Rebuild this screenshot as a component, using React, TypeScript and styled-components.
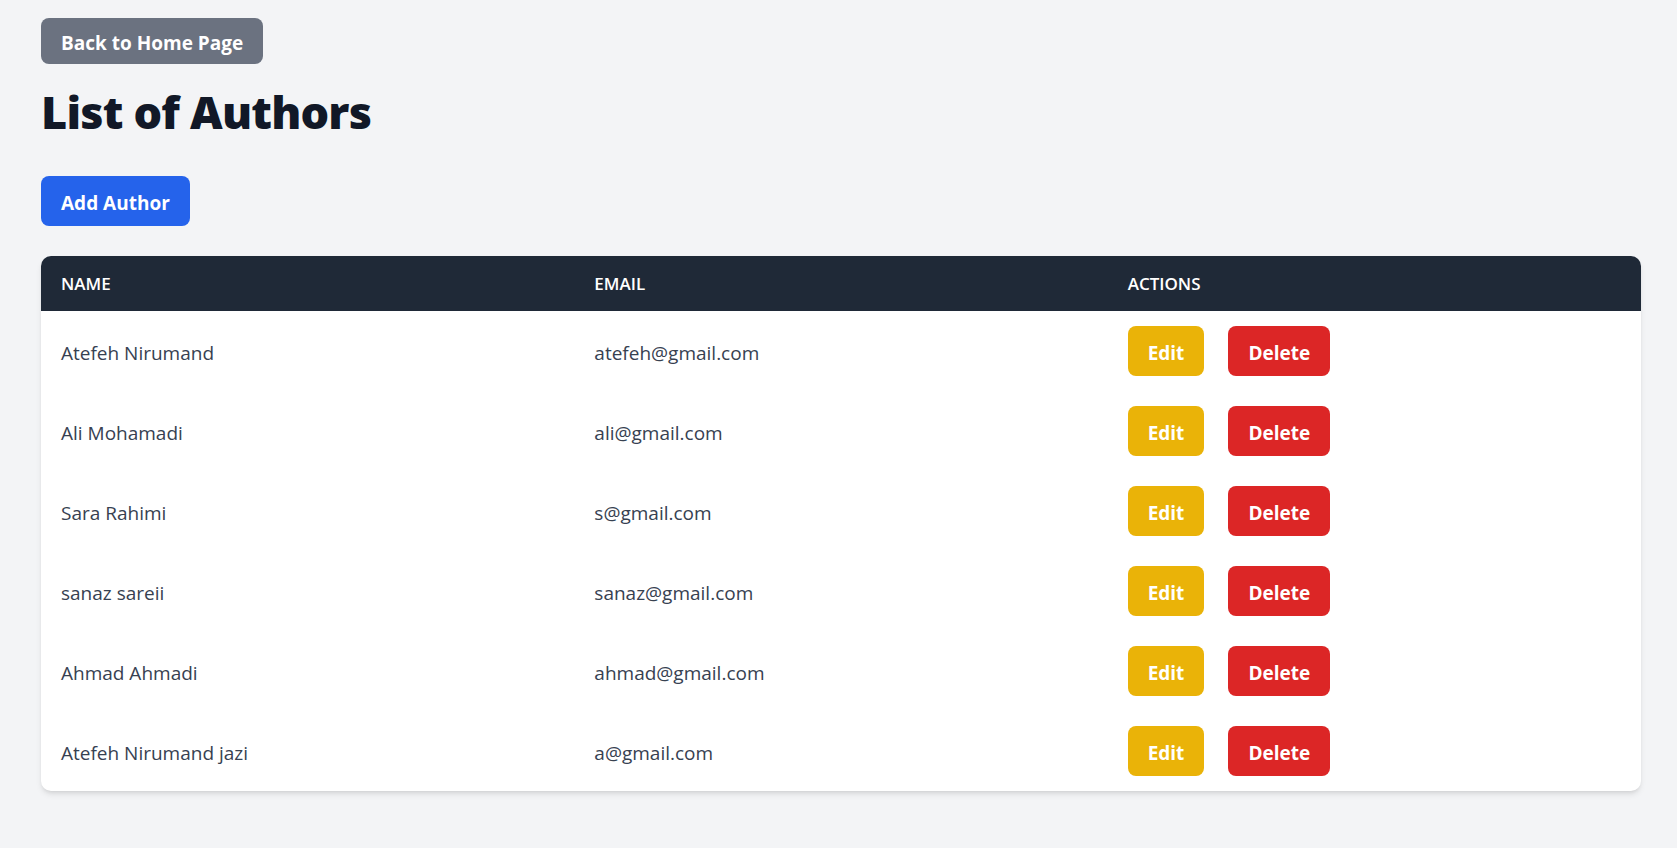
import { createGlobalStyle, styled } from "styled-components"

interface IAuthor {
    name: string,
    email: string
}

const authors: IAuthor[] = [
    { name: "Atefeh Nirumand", email: "atefeh@gmail.com" },
    { name: "Ali Mohamadi", email: "ali@gmail.com" },
    { name: "Sara Rahimi", email: "s@gmail.com" },
    { name: "sanaz sareii", email: "sanaz@gmail.com" },
    { name: "Ahmad Ahmadi", email: "ahmad@gmail.com" },
    { name: "Atefeh Nirumand jazi", email: "a@gmail.com" },
]

const App = () => {
  return (
    <Page>
        <GlobalStyle />
        <Button $variant="gray" $tall={false}>Back to Home Page</Button>
        <Title>List of Authors</Title>
        <Button $variant="blue" $tall={true}>Add Author</Button>
        <TableCard>
            <Table>
                <thead>
                    <HeadRow>
                        <Th>Name</Th>
                        <Th>Email</Th>
                        <Th>Actions</Th>
                    </HeadRow>
                </thead>
                <tbody>
                    {authors.map((a) => (
                        <Row key={a.email}>
                            <Td $text={true}>{a.name}</Td>
                            <Td $text={true}>{a.email}</Td>
                            <Td $text={false}>
                                <Actions>
                                    <Button $variant="yellow" $tall={true}>Edit</Button>
                                    <Button $variant="red" $tall={true}>Delete</Button>
                                </Actions>
                            </Td>
                        </Row>
                    ))}
                </tbody>
            </Table>
        </TableCard>
    </Page>
  )
}

export default App

const GlobalStyle = createGlobalStyle`
    body {
        margin: 0;
        background-color: #f3f4f6;
        font-family: "Open Sans", "Noto Sans", sans-serif;
    }
`
const Page = styled.div`
    display: flex;
    flex-direction: column;
    align-items: flex-start;
    padding: 18px 0 40px 41px;
`
const colors = {
    gray: "#6b7280",
    blue: "#2563eb",
    yellow: "#eab308",
    red: "#dc2626",
}
const Button = styled.button<{ $variant: keyof typeof colors, $tall: boolean }>`
    background-color: ${(p) => colors[p.$variant]};
    color: #ffffff;
    border: none;
    border-radius: 8px;
    font-family: "Open Sans", "Noto Sans", sans-serif;
    font-weight: 700;
    font-size: 19px;
    line-height: 30px;
    padding: ${(p) => (p.$tall ? "12px 20px 8px" : "10px 20px 6px")};
    cursor: pointer;
`
const Title = styled.h1`
    margin: 23px 0 39px 0;
    font-size: 45px;
    line-height: 50px;
    font-weight: 800;
    letter-spacing: -0.8px;
    color: #111827;
`
const TableCard = styled.div`
    margin-top: 30px;
    width: 1600px;
    background-color: #ffffff;
    border-radius: 10px;
    overflow: hidden;
    box-shadow: 0 4px 6px -1px rgba(0, 0, 0, 0.1), 0 2px 4px -2px rgba(0, 0, 0, 0.1);
`
const Table = styled.table`
    width: 100%;
    border-collapse: collapse;
    table-layout: fixed;
`
const HeadRow = styled.tr`
    background-color: #1f2937;
    height: 55px;
`
const Th = styled.th`
    text-align: left;
    padding: 0 20px;
    color: #ffffff;
    font-size: 17px;
    font-weight: 600;
    text-transform: uppercase;
`
const Row = styled.tr`
    height: 80px;
`
const Td = styled.td<{ $text: boolean }>`
    padding: ${(p) => (p.$text ? "4px 20px 0" : "0 20px")};
    color: #374151;
    font-size: 19px;
`
const Actions = styled.div`
    display: flex;
    gap: 24px;
`
